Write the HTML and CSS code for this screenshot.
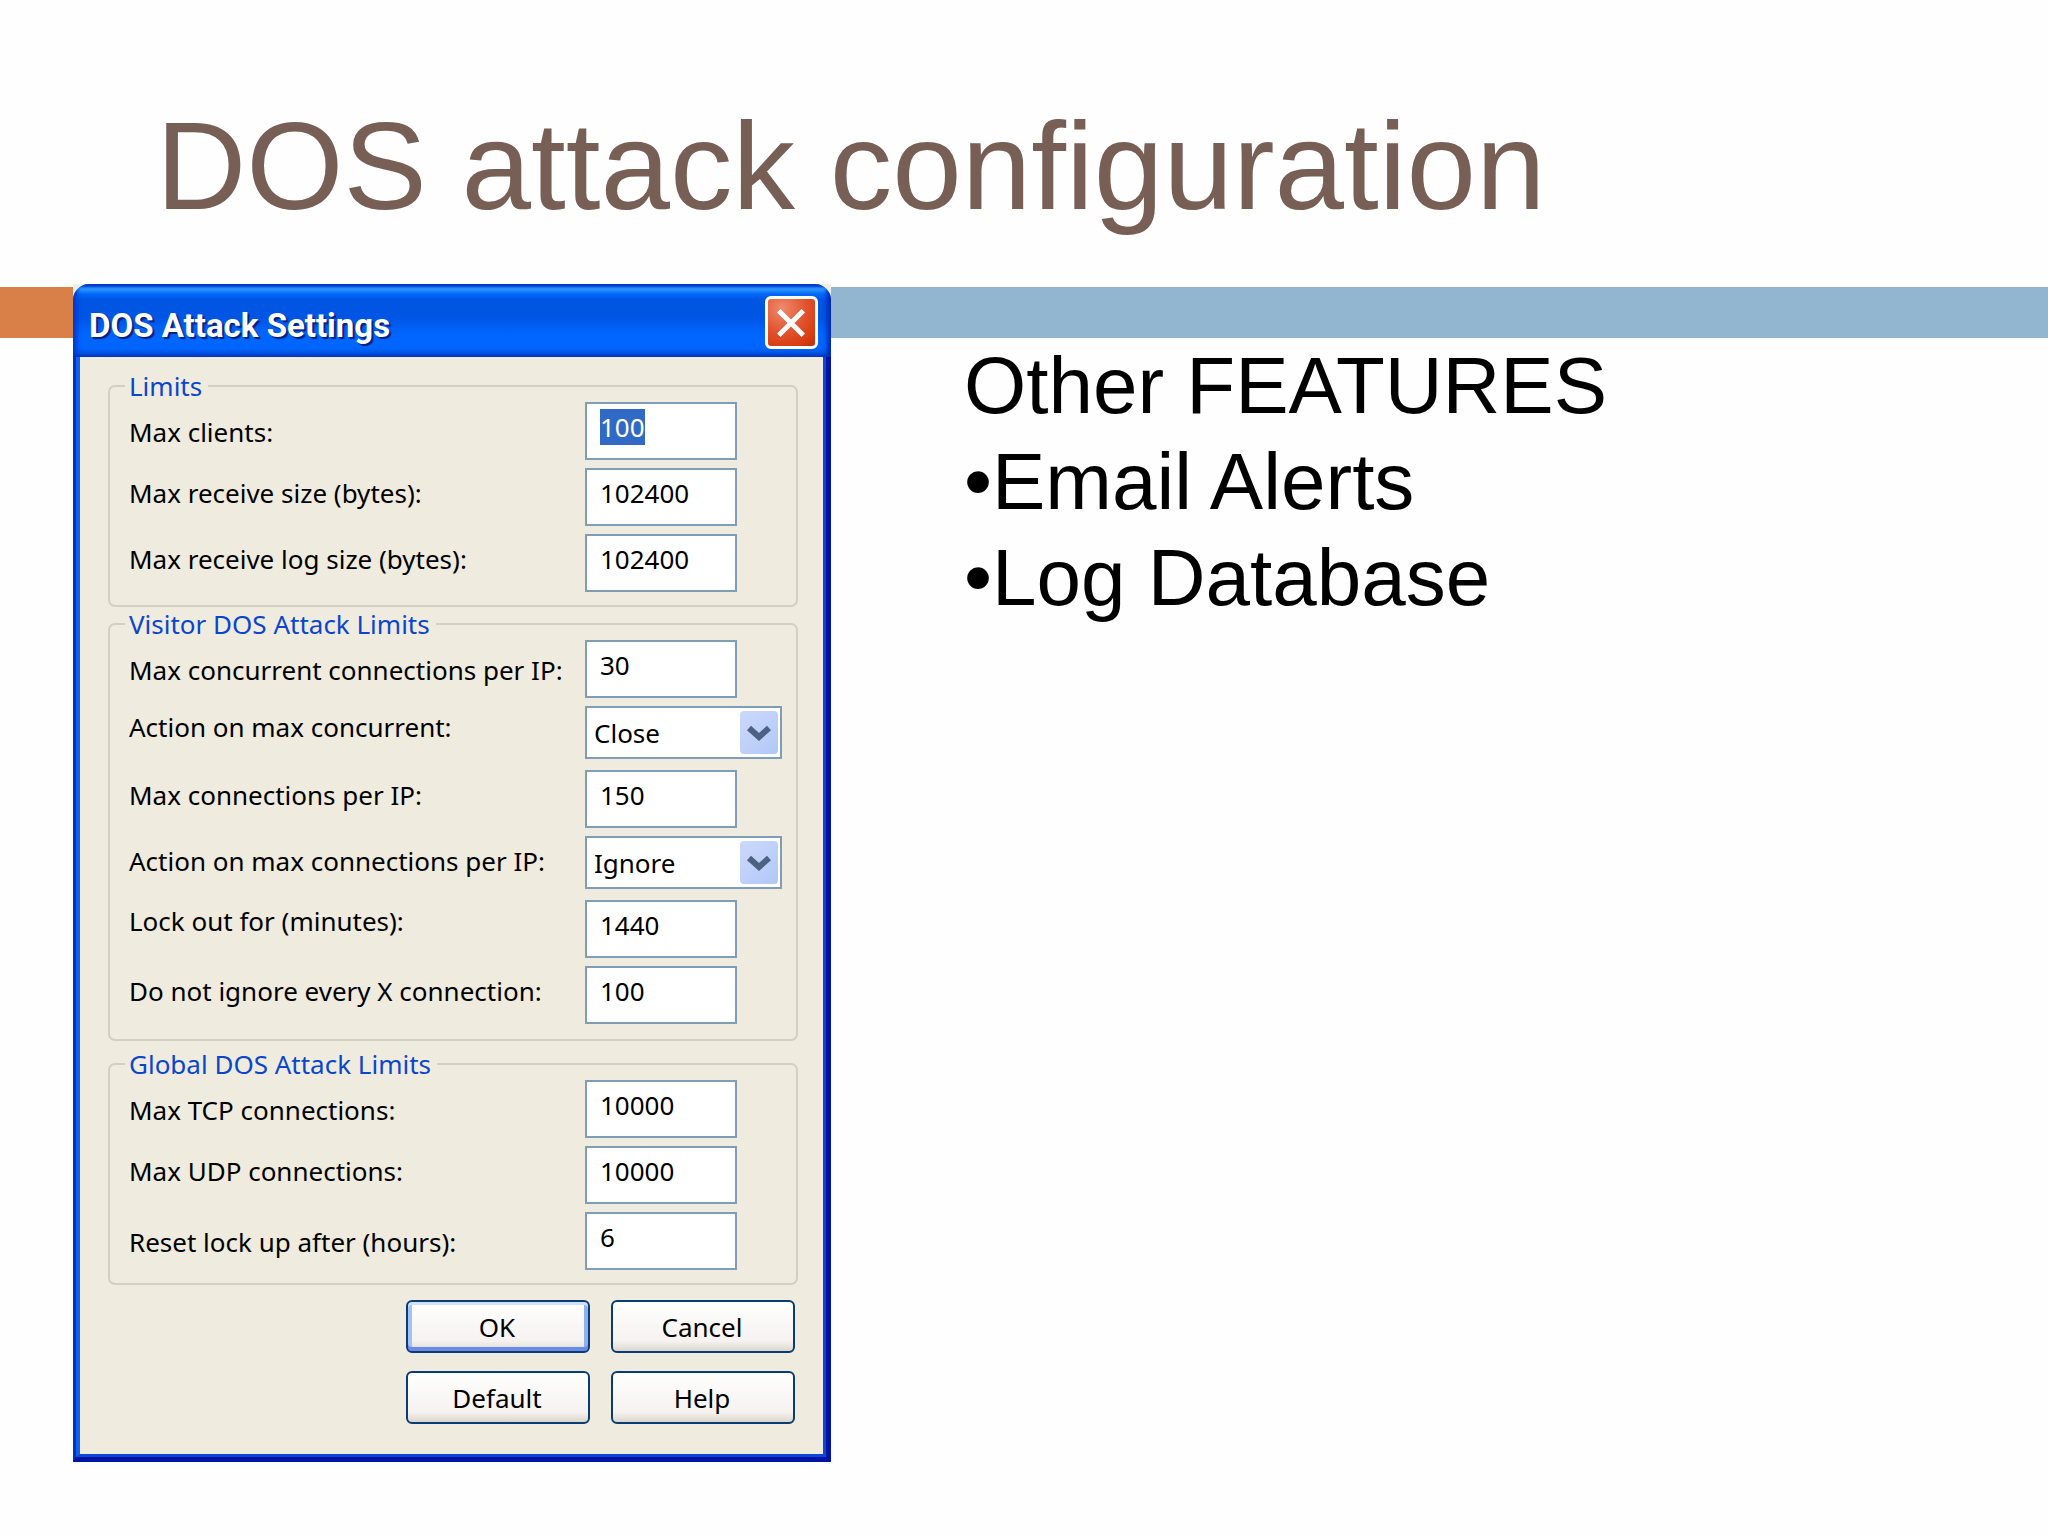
FILE: index.html
```html
<!DOCTYPE html>
<html lang="en">
<head>
    <meta charset="UTF-8">
    <meta name="viewport" content="width=device-width, initial-scale=1.0">
    <title>DOS attack configuration</title>
    <link rel="stylesheet" href="styles.css">
</head>
<body>
    <header class="slide-header">
        <h1>DOS attack configuration</h1>
    </header>
    <div class="band">
        <div class="band-accent"></div>
        <div class="band-main"></div>
    </div>

    <main class="content">
        <div class="window-area">
            <form class="window" id="settingsForm">
                <div class="title-bar">
                    <h2>DOS Attack Settings</h2>
                    <button type="button" class="close-btn" aria-label="Close window">
                        <svg viewBox="0 0 48 48" width="48" height="48">
                            <path d="M11 12 L36 37 M36 12 L11 37" stroke="#fff" stroke-width="5" fill="none"/>
                        </svg>
                    </button>
                </div>
                <div class="window-frame">
                    <div class="window-body">
                        <fieldset>
                            <legend>Limits</legend>
                            <div class="row low">
                                <label for="maxClients">Max clients:</label>
                                <input type="text" id="maxClients" value="100">
                            </div>
                            <div class="row">
                                <label for="maxReceive">Max receive size (bytes):</label>
                                <input type="text" id="maxReceive" value="102400">
                            </div>
                            <div class="row">
                                <label for="maxReceiveLog">Max receive log size (bytes):</label>
                                <input type="text" id="maxReceiveLog" value="102400">
                            </div>
                        </fieldset>

                        <fieldset class="visitor">
                            <legend>Visitor DOS Attack Limits</legend>
                            <div class="row low">
                                <label for="maxConcurrent">Max concurrent connections per IP:</label>
                                <input type="text" id="maxConcurrent" value="30">
                            </div>
                            <div class="row high">
                                <label for="actionConcurrent">Action on max concurrent:</label>
                                <div class="select-box">
                                    <select id="actionConcurrent">
                                        <option>Close</option>
                                        <option>Ignore</option>
                                    </select>
                                    <span class="arrow">
                                        <svg viewBox="0 0 38 43" width="38" height="43">
                                            <path d="M9 17 L19 26 L29 17" stroke="#4d6185" stroke-width="6" fill="none"/>
                                        </svg>
                                    </span>
                                </div>
                            </div>
                            <div class="row">
                                <label for="maxPerIp">Max connections per IP:</label>
                                <input type="text" id="maxPerIp" value="150">
                            </div>
                            <div class="row">
                                <label for="actionPerIp">Action on max connections per IP:</label>
                                <div class="select-box">
                                    <select id="actionPerIp">
                                        <option>Ignore</option>
                                        <option>Close</option>
                                    </select>
                                    <span class="arrow">
                                        <svg viewBox="0 0 38 43" width="38" height="43">
                                            <path d="M9 17 L19 26 L29 17" stroke="#4d6185" stroke-width="6" fill="none"/>
                                        </svg>
                                    </span>
                                </div>
                            </div>
                            <div class="row high">
                                <label for="lockOut">Lock out for (minutes):</label>
                                <input type="text" id="lockOut" value="1440">
                            </div>
                            <div class="row">
                                <label for="notIgnore">Do not ignore every X connection:</label>
                                <input type="text" id="notIgnore" value="100">
                            </div>
                        </fieldset>

                        <fieldset class="global">
                            <legend>Global DOS Attack Limits</legend>
                            <div class="row low">
                                <label for="maxTcp">Max TCP connections:</label>
                                <input type="text" id="maxTcp" value="10000">
                            </div>
                            <div class="row">
                                <label for="maxUdp">Max UDP connections:</label>
                                <input type="text" id="maxUdp" value="10000">
                            </div>
                            <div class="row low">
                                <label for="resetAfter">Reset lock up after (hours):</label>
                                <input type="text" id="resetAfter" value="6">
                            </div>
                        </fieldset>

                        <div class="buttons">
                            <button type="submit" class="btn btn-default">OK</button>
                            <button type="button" class="btn">Cancel</button>
                            <button type="reset" class="btn">Default</button>
                            <button type="button" class="btn">Help</button>
                        </div>
                    </div>
                </div>
            </form>
        </div>

        <section class="features">
            <p>Other FEATURES</p>
            <ul>
                <li>•Email Alerts</li>
                <li>•Log Database</li>
            </ul>
        </section>
    </main>

    <script>
        const firstField = document.getElementById('maxClients');
        firstField.focus();
        firstField.select();

        document.getElementById('settingsForm').addEventListener('submit', function(event) {
            event.preventDefault();
        });
    </script>
</body>
</html>
```
FILE: styles.css
```css
* {
    box-sizing: border-box;
}
body {
    margin: 0;
    background: #fefefe;
    color: #000;
    font-family: 'Liberation Sans', Arial, sans-serif;
}
.slide-header {
    padding: 94px 0 49px 156px;
}
h1 {
    margin: 0;
    color: #775f55; /* Brown heading */
    font-size: 125px;
    font-weight: normal;
    line-height: 144px;
}
.band {
    display: flex;
    height: 51px;
}
.band-accent {
    width: 80px;
    background: #d98048; /* Orange accent */
}
.band-main {
    flex: 1;
    background: #92b5d0;
}
.content {
    display: flex;
    align-items: flex-start;
    position: relative;
    margin-top: -54px; /* Window sits over the band */
    padding-left: 73px;
    gap: 133px;
}
.window-area {
    flex: none;
    width: 758px;
    max-width: 100%;
    background: #f1eee6;
}
.window {
    border-radius: 16px 16px 0 0;
    overflow: hidden;
    font-family: 'Noto Sans', Tahoma, sans-serif;
    font-size: 26px;
}
.title-bar {
    display: flex;
    justify-content: space-between;
    height: 73px;
    padding: 12px 13px 8px 16px;
    background: linear-gradient(to bottom, #0050d8 0, #0050d8 2px, #2a90ff 4px, #2a90ff 6px, #0068fa 10px, #0055e2 16px, #0055e4 34px, #0066ff 50px, #0066ff 64px, #0046cc 73px);
    box-shadow: inset -4px 0 4px #0028b4, inset 4px 0 5px #0038d0;
}
h2 {
    margin: 0;
    padding-top: 10px;
    color: #fff;
    font-family: Roboto, 'Trebuchet MS', sans-serif;
    font-size: 33px;
    line-height: 40px;
    text-shadow: 2px 2px 1px #0a1f80;
}
.close-btn {
    width: 53px;
    height: 53px;
    padding: 0;
    border: 3px solid #fff;
    border-radius: 6px;
    background: radial-gradient(circle at 30% 20%, #ee8a6c, #e0512c 50%, #d83c10 80%, #b83010);
    line-height: 0;
}
.close-btn svg {
    width: 47px;
    height: 47px;
}
.window-frame {
    border: solid #0014a4;
    border-width: 0 5px 5px 3px;
    border-left-color: #0230c8;
}
.window-body {
    padding: 13px 25px 30px 28px;
    border: solid #0c48d8;
    border-width: 0 3px 3px 4px;
    border-left-color: #0f60ea;
    background: #efebde;
}
fieldset {
    min-width: 0;
    margin: 0;
    padding: 0 14px 13px 19px;
    border: 2px solid #d3d0c2;
    border-radius: 7px;
}
.visitor {
    margin-top: 1px;
    padding-bottom: 15px;
}
.global {
    margin-top: 7px;
}
legend {
    margin-left: -4px;
    padding: 0 6px 0 4px;
    color: #0a46cc;
    line-height: 32px;
}
.row {
    display: grid;
    grid-template-columns: 1fr 197px;
    align-items: start;
    min-height: 56px;
}
.row + .row {
    margin-top: 8px;
}
label {
    padding-top: 7px;
    line-height: 36px;
    white-space: nowrap;
}
.low label {
    padding-top: 12px;
}
.high label {
    padding-top: 3px;
}
input, select, .btn {
    margin: 0;
    color: #000;
    font-family: inherit;
    font-size: inherit;
}
input, select {
    border: 2px solid #7f9db9;
    border-radius: 0;
    background: #fff;
    outline: none;
}
input {
    width: 152px;
    height: 58px;
    padding: 5px 13px 13px;
    line-height: 36px;
}
input::selection {
    background: #316ac5;
    color: #fff;
}
.select-box {
    position: relative;
}
select {
    width: 100%;
    height: 53px;
    padding: 0 44px 0 7px;
    appearance: none;
}
.arrow {
    position: absolute;
    top: 5px;
    right: 4px;
    width: 38px;
    height: 43px;
    border-radius: 4px;
    background: linear-gradient(135deg, #ccd8fa, #bccffa 60%, #b0c8f4);
    pointer-events: none;
}
.buttons {
    display: grid;
    grid-template-columns: 184px 184px;
    justify-content: end;
    gap: 18px 21px;
    margin: 15px 3px 0 0;
}
.btn {
    height: 53px;
    padding: 0 2px 0 0;
    border: 2px solid #0a3c74;
    border-radius: 6px;
    background: linear-gradient(to bottom, #fff, #f5f2f0 80%, #dcd6cc);
}
.btn-default {
    box-shadow: inset 0 3px 0 #cfe0ff, inset 0 -4px 0 #6a8ce8, inset 4px 0 0 #a4c0f4, inset -4px 0 0 #8fb0f0;
}
.features {
    flex: 1;
    padding-top: 54px;
    font-size: 80px;
    line-height: 96px;
}
.features p, .features ul {
    margin: 0;
    padding: 0;
    list-style: none;
}
```
